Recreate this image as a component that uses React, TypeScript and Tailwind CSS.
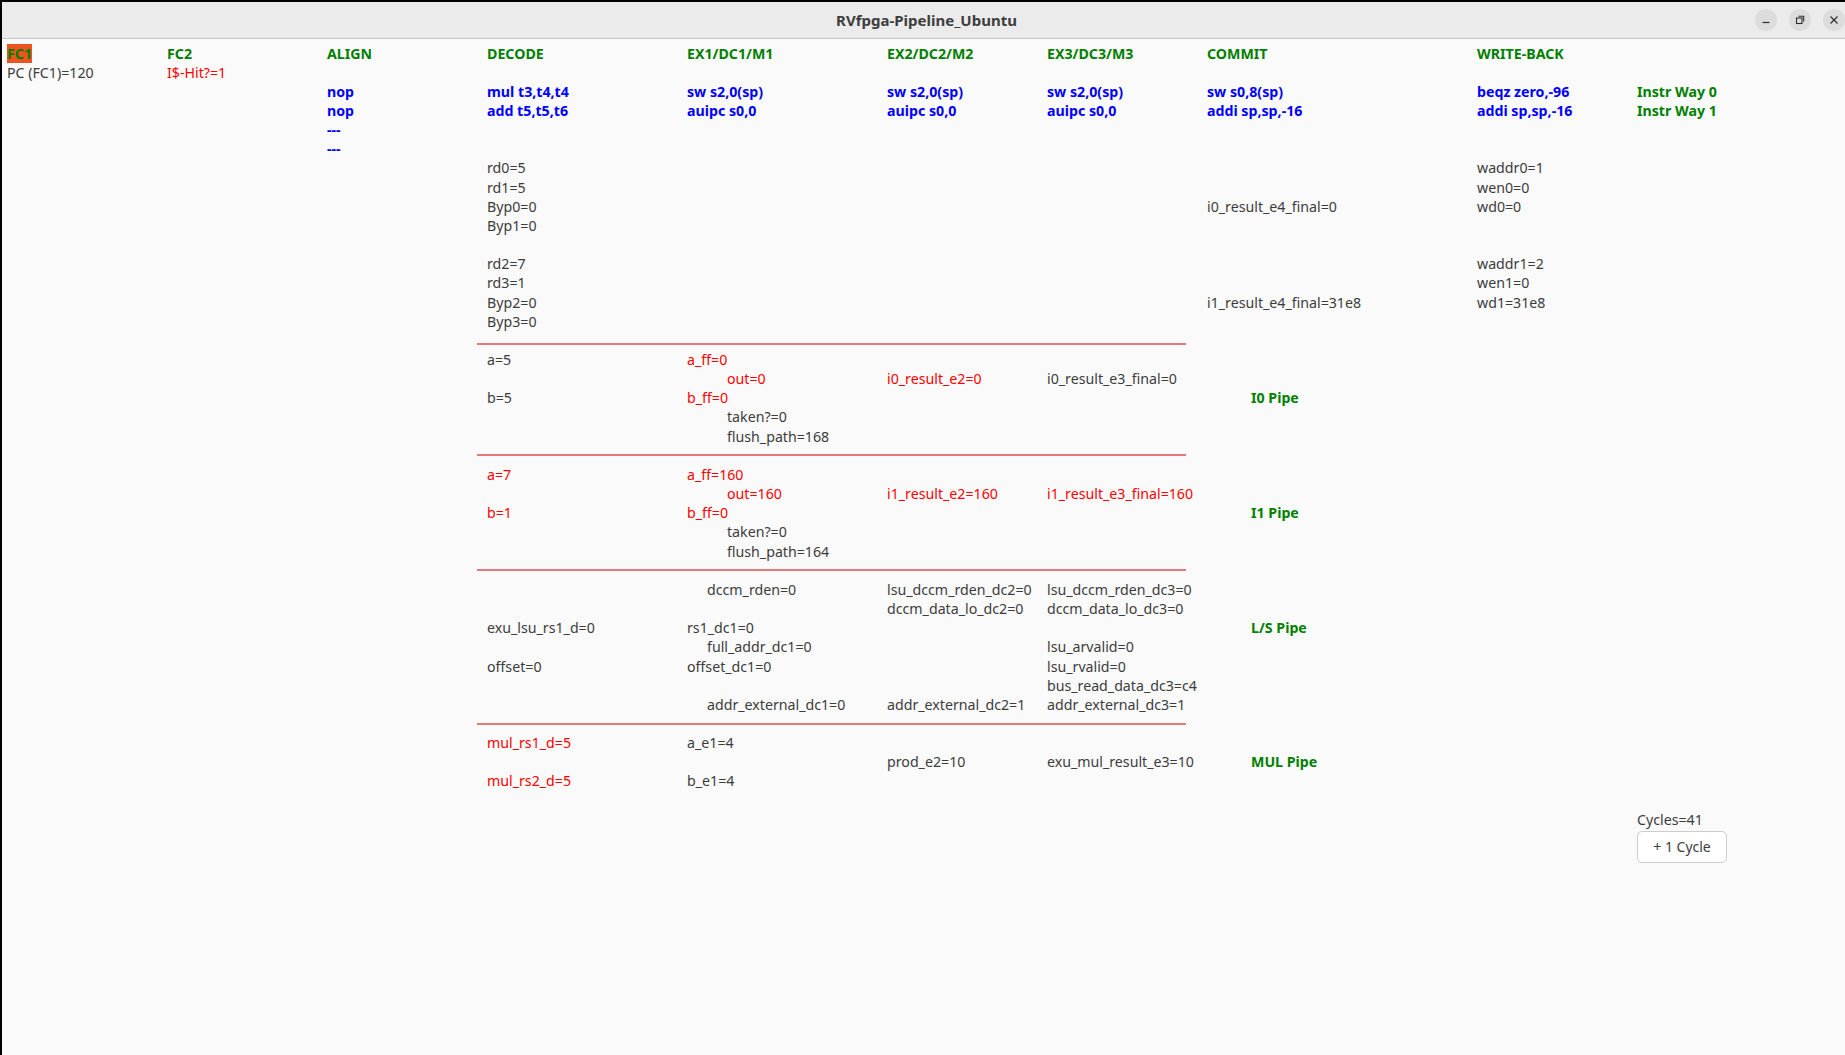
import { Fragment } from "react"

type Tone = "n" | "g" | "b" | "r" | "hl"
type Cell = [number, string, Tone?, number?]
type Row = Cell[] | "sep1" | "sep2" | "sep3" | "sep4" | "button"

const rows: Row[] = [
  [[0, "FC1", "hl"], [1, "FC2", "g"], [2, "ALIGN", "g"], [3, "DECODE", "g"], [4, "EX1/DC1/M1", "g"], [5, "EX2/DC2/M2", "g"], [6, "EX3/DC3/M3", "g"], [7, "COMMIT", "g"], [8, "WRITE-BACK", "g"]],
  [[0, "PC (FC1)=120"], [1, "I$-Hit?=1", "r"]],
  [[2, "nop", "b"], [3, "mul t3,t4,t4", "b"], [4, "sw s2,0(sp)", "b"], [5, "sw s2,0(sp)", "b"], [6, "sw s2,0(sp)", "b"], [7, "sw s0,8(sp)", "b"], [8, "beqz zero,-96", "b"], [9, "Instr Way 0", "g"]],
  [[2, "nop", "b"], [3, "add t5,t5,t6", "b"], [4, "auipc s0,0", "b"], [5, "auipc s0,0", "b"], [6, "auipc s0,0", "b"], [7, "addi sp,sp,-16", "b"], [8, "addi sp,sp,-16", "b"], [9, "Instr Way 1", "g"]],
  [[2, "---", "b"]],
  [[2, "---", "b"]],
  [[3, "rd0=5"], [8, "waddr0=1"]],
  [[3, "rd1=5"], [8, "wen0=0"]],
  [[3, "Byp0=0"], [7, "i0_result_e4_final=0"], [8, "wd0=0"]],
  [[3, "Byp1=0"]],
  [],
  [[3, "rd2=7"], [8, "waddr1=2"]],
  [[3, "rd3=1"], [8, "wen1=0"]],
  [[3, "Byp2=0"], [7, "i1_result_e4_final=31e8"], [8, "wd1=31e8"]],
  [[3, "Byp3=0"]],
  "sep1",
  [[3, "a=5"], [4, "a_ff=0", "r"]],
  [[4, "out=0", "r", 40], [5, "i0_result_e2=0", "r"], [6, "i0_result_e3_final=0"]],
  [[3, "b=5"], [4, "b_ff=0", "r"], [7, "I0 Pipe", "g", 44]],
  [[4, "taken?=0", "n", 40]],
  [[4, "flush_path=168", "n", 40]],
  "sep2",
  [[3, "a=7", "r"], [4, "a_ff=160", "r"]],
  [[4, "out=160", "r", 40], [5, "i1_result_e2=160", "r"], [6, "i1_result_e3_final=160", "r"]],
  [[3, "b=1", "r"], [4, "b_ff=0", "r"], [7, "I1 Pipe", "g", 44]],
  [[4, "taken?=0", "n", 40]],
  [[4, "flush_path=164", "n", 40]],
  "sep3",
  [[4, "dccm_rden=0", "n", 20], [5, "lsu_dccm_rden_dc2=0"], [6, "lsu_dccm_rden_dc3=0"]],
  [[5, "dccm_data_lo_dc2=0"], [6, "dccm_data_lo_dc3=0"]],
  [[3, "exu_lsu_rs1_d=0"], [4, "rs1_dc1=0"], [7, "L/S Pipe", "g", 44]],
  [[4, "full_addr_dc1=0", "n", 20], [6, "lsu_arvalid=0"]],
  [[3, "offset=0"], [4, "offset_dc1=0"], [6, "lsu_rvalid=0"]],
  [[6, "bus_read_data_dc3=c4"]],
  [[4, "addr_external_dc1=0", "n", 20], [5, "addr_external_dc2=1"], [6, "addr_external_dc3=1"]],
  "sep4",
  [[3, "mul_rs1_d=5", "r"], [4, "a_e1=4"]],
  [[5, "prod_e2=10"], [6, "exu_mul_result_e3=10"], [7, "MUL Pipe", "g", 44]],
  [[3, "mul_rs2_d=5", "r"], [4, "b_e1=4"]],
  [],
  [[9, "Cycles=41"]],
  "button",
]

const toneClass: Record<Tone, string> = {
  n: "text-[#3c3c3c]",
  g: "text-[#008000] font-bold",
  b: "text-[#0000ff] font-bold",
  r: "text-[#ff0000]",
  hl: "text-[#008000] font-bold bg-[#e95420]",
}

const indentClass: Record<number, string> = {
  0: "",
  20: "pl-[20px]",
  40: "pl-[40px]",
  44: "pl-[44px]",
}

// each separator line sits at a slightly different height in its row
const sepOffset: Record<string, string> = {
  sep1: "pt-[12px]",
  sep2: "pt-[8px]",
  sep3: "pt-[8px]",
  sep4: "pt-[9px]",
}

const gridCols = "grid grid-cols-[160px_160px_160px_200px_200px_160px_160px_270px_160px_1fr]"

function DataRow({ cells }: { cells: Cell[] }) {
  const slots: (Cell | null)[] = Array(10).fill(null)
  cells.forEach((c) => (slots[c[0]] = c))
  return (
    <div className={`${gridCols} h-[19.17px] leading-[19.17px]`}>
      {slots.map((c, i) => (
        <div key={i} className={`whitespace-nowrap ${c ? indentClass[c[3] ?? 0] : ""}`}>
          {c && <span className={toneClass[c[2] ?? "n"]}>{c[1]}</span>}
        </div>
      ))}
    </div>
  )
}

export default function App() {
  return (
    <div
      className="w-[1845px] h-[1055px] overflow-hidden bg-black pt-[2px] pl-[2px] flex flex-col"
      style={{ fontFamily: '"Noto Sans", "Open Sans", sans-serif' }}
    >
      {/* Title bar */}
      <div className="h-[37px] bg-[#ebebeb] border-b border-[#c6c6c6] grid grid-cols-[1fr_auto_1fr] items-center shrink-0">
        <div />
        <div className="text-[15px] font-bold text-[#3d3d3d] pl-[6px]">RVfpga-Pipeline_Ubuntu</div>
        <div className="flex justify-end items-center gap-[12px]">
          <div className="w-[22px] h-[22px] rounded-full bg-[#dcdcdc] flex items-center justify-center">
            <svg width="10" height="10" viewBox="0 0 10 10">
              <path d="M1.5 7.5h7" stroke="#2e2e2e" strokeWidth="1.2" />
            </svg>
          </div>
          <div className="w-[22px] h-[22px] rounded-full bg-[#dcdcdc] flex items-center justify-center">
            <svg width="10" height="10" viewBox="0 0 10 10" fill="none">
              <rect x="1.5" y="3" width="5.5" height="5.5" stroke="#2e2e2e" strokeWidth="1.1" />
              <path d="M3.5 1.2h5.2v5.2" stroke="#2e2e2e" strokeWidth="1.1" />
            </svg>
          </div>
          <div className="w-[22px] h-[22px] rounded-full bg-[#dcdcdc] flex items-center justify-center">
            <svg width="10" height="10" viewBox="0 0 10 10">
              <path d="M1.5 1.5l7 7M8.5 1.5l-7 7" stroke="#2e2e2e" strokeWidth="1.2" />
            </svg>
          </div>
        </div>
      </div>

      {/* Pipeline view */}
      <div className="flex-1 bg-[#fafafa] pl-[5px] pt-[4.5px] text-[14.2px]">
        {rows.map((row, i) => (
          <Fragment key={i}>
            {typeof row === "string" && row.startsWith("sep") ? (
              <div className={`h-[19.17px] ${sepOffset[row]}`}>
                <div className="ml-[470px] w-[709px] h-[2px] bg-[#e27a7a]" />
              </div>
            ) : row === "button" ? (
              <div className={`${gridCols} pt-[2px]`}>
                <div className="col-start-10">
                  <button className="w-[90px] h-[32px] rounded-[5px] border border-[#cdcdcd] bg-white text-[#3c3c3c] text-[14px]">
                    + 1 Cycle
                  </button>
                </div>
              </div>
            ) : (
              <DataRow cells={row as Cell[]} />
            )}
          </Fragment>
        ))}
      </div>
    </div>
  )
}
